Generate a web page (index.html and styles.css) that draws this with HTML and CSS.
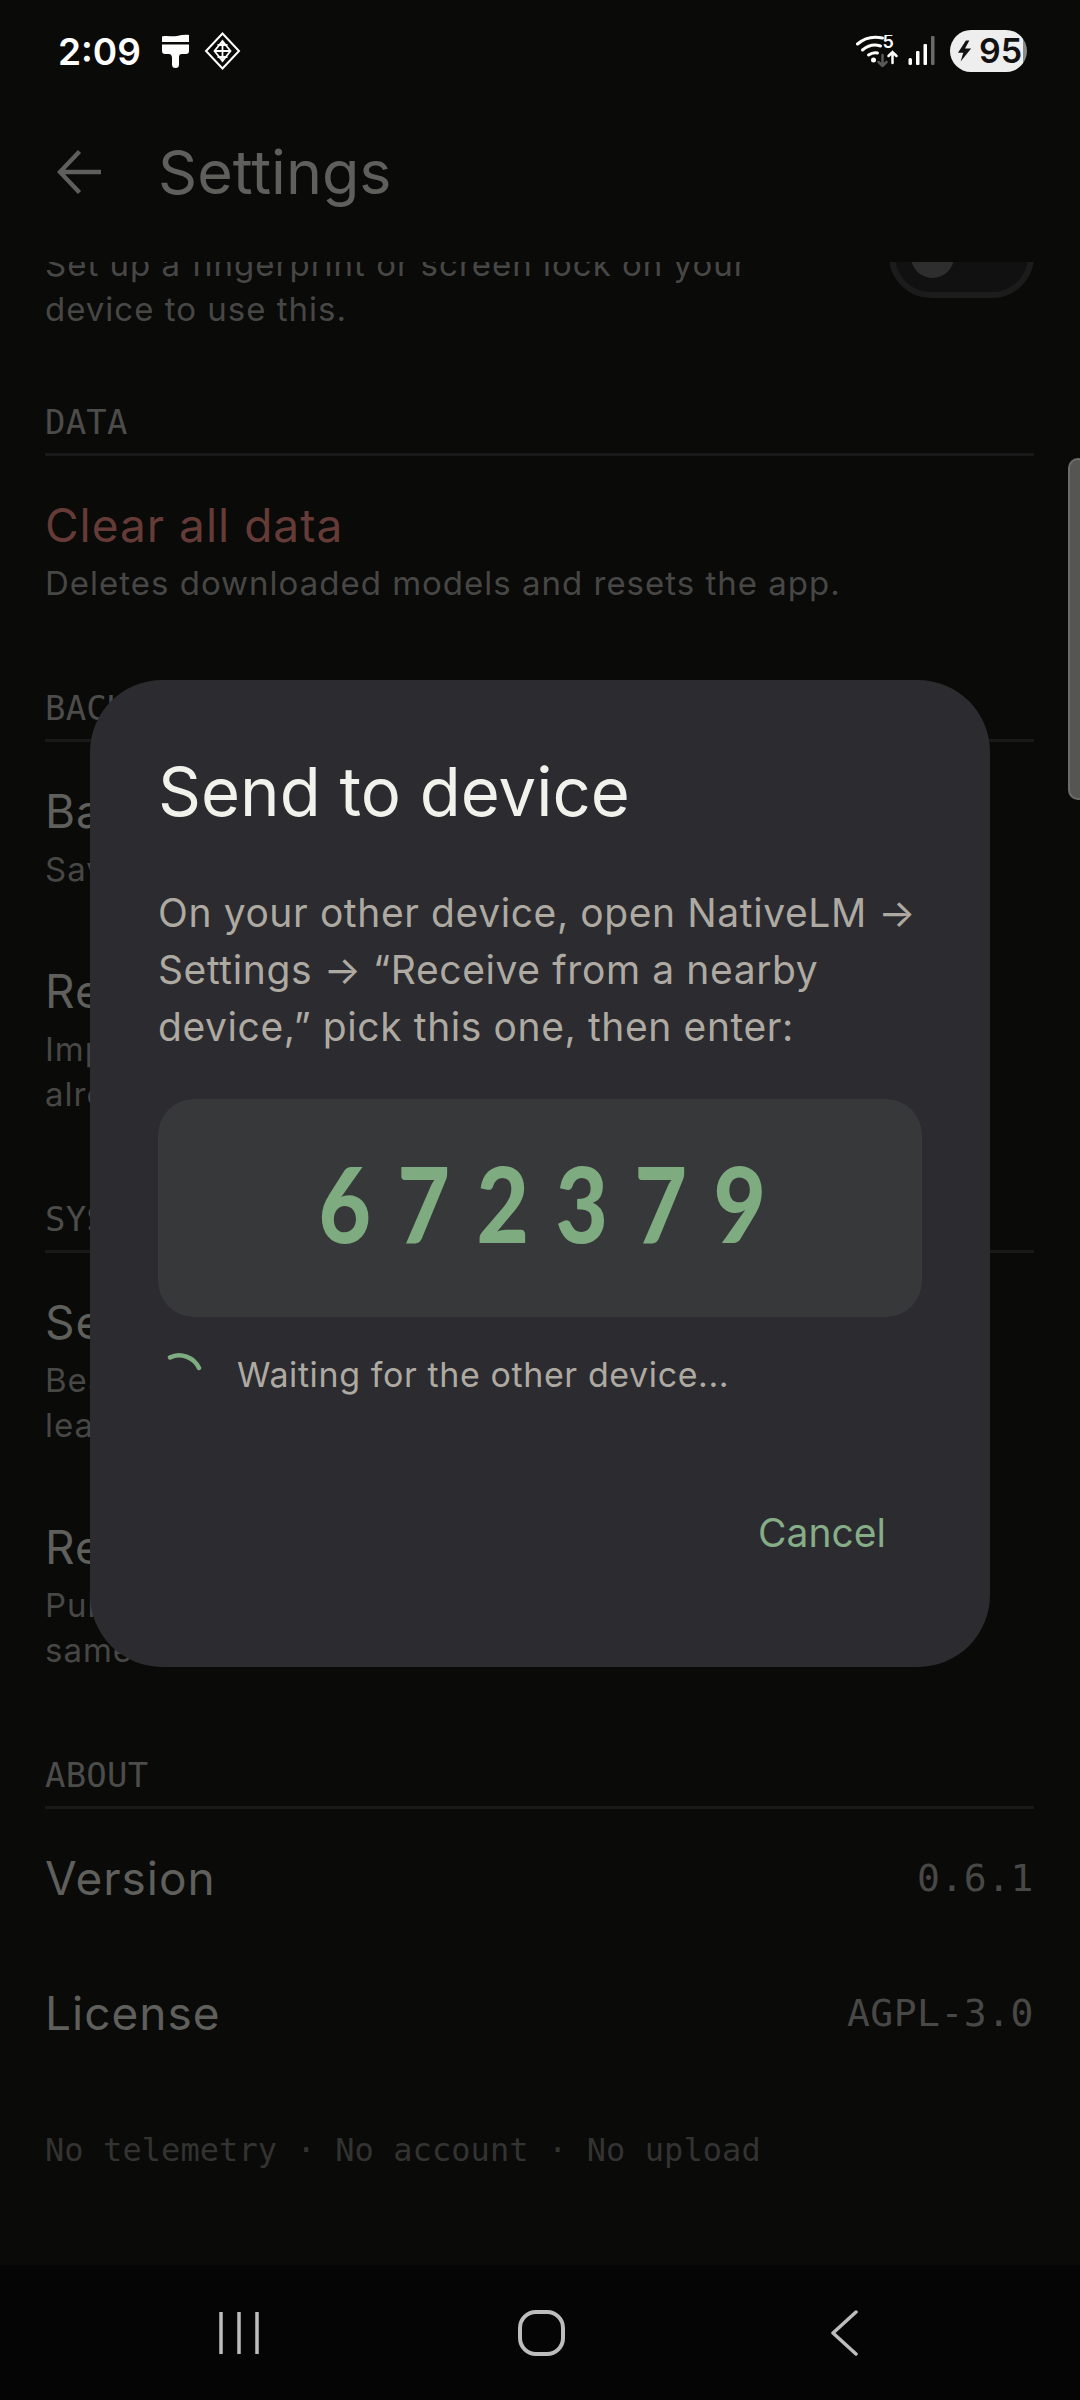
FILE: index.html
```html
<!DOCTYPE html>
<html lang="en">
<head>
<meta charset="utf-8">
<title>Settings</title>
<link rel="stylesheet" href="styles.css">
</head>
<body>
<div class="screen">
  <header class="status">
    <div class="status-left">
      <span class="time">2:09</span>
      <svg class="brush" viewBox="0 0 27 34"><path fill="#fff" d="M0 2.500C6 1 9 3 15 2c4-.7 8-1.500 12-1v7H0zM0 10.500h27v6.500c0 2-1 3-3 3h-4c-2 0-3 1-3 3v7.500a3.500 3.500 0 0 1-7 0V24c0-2-1-4-3-4H3c-2 0-3-1-3-3z"/></svg>
      <svg class="diamond" viewBox="0 0 36 38" fill="none" stroke="#fff"><path stroke-width="2" d="M18 1.500 34.500 19 18 36.500 1.500 19z"/><path stroke-width="1.800" d="M18 9l8 10-8 10-8-10zM13 13h10M13 25h10M10 19h16M18 9v20"/></svg>
    </div>
    <div class="status-right">
      <svg class="wifi" viewBox="0 0 42 32" fill="none" stroke-linecap="round"><g stroke="#fff" stroke-width="3"><path d="M1 9C9 2 17 1 26 3"/><path d="M6 15c6-5 12-6 18-4"/><path d="M12 20c3-2 5-3 9-2"/></g><circle cx="17" cy="25" r="2.500" fill="#fff"/><path stroke="#5a5a5a" stroke-width="2.500" d="M26 20v11M22 27l4 4 4-4"/><path stroke="#fff" stroke-width="2.500" d="M36 28V17M32 21l4-4 4 4"/><text x="26" y="13" class="wifi-five">5</text></svg>
      <svg class="signal" viewBox="0 0 26 30"><rect x="0" y="22" width="3.500" height="7" rx="1.500" fill="#fff"/><rect x="7.500" y="15" width="3.500" height="14" rx="1" fill="#fff"/><rect x="15" y="8" width="3.500" height="21" rx="1" fill="#fff"/><rect x="22.500" y="0" width="3.500" height="29" rx="1" fill="#6a6a6a"/></svg>
      <div class="battery">
        <svg class="bolt" viewBox="0 0 16 24"><path fill="#111" d="M9 0 0 14h6l-3 10 12-15H8l5-9z"/></svg>
        <span class="battery-num">95</span>
      </div>
    </div>
  </header>

  <div class="appbar">
    <svg class="back" viewBox="0 0 46 46" fill="none" stroke="#5f5f5c" stroke-width="4.500"><path d="M45 23H4M23 2 3 23l20 21"/></svg>
    <h1 class="title">Settings</h1>
  </div>

  <main class="viewport">
    <div class="scroller">
      <section class="row-top">
        <p class="desc first">Set up a fingerprint or screen lock on your device to use this.</p>
        <span class="toggle"><span class="thumb"></span></span>
      </section>

      <h2 class="section section-first">DATA</h2>
      <div class="item"><h3 class="name danger">Clear all data</h3><p class="desc">Deletes downloaded models and resets the app.</p></div>

      <h2 class="section">BACKUP</h2>
      <div class="item"><h3 class="name">Back up to a file</h3><p class="desc">Saves chats and settings to a file, password-protected.</p></div>
      <div class="item"><h3 class="name">Restore from a file</h3><p class="desc">Imports a backup file and replaces anything you<br>already have on this device.</p></div>

      <h2 class="section">SYSTEM</h2>
      <div class="item"><h3 class="name">Send to a nearby device</h3><p class="desc">Beam your data to another device on Wi-Fi, with nothing<br>leaving your network.</p></div>
      <div class="item"><h3 class="name">Receive from a nearby device</h3><p class="desc">Pulls data from another device connected to the<br>same network.</p></div>

      <h2 class="section">ABOUT</h2>
      <div class="kv"><span class="name">Version</span><span class="val">0.6.1</span></div>
      <div class="kv"><span class="name">License</span><span class="val">AGPL-3.0</span></div>
      <p class="foot">No telemetry · No account · No upload</p>
    </div>
    <div class="scrollbar"></div>
  </main>

  <nav class="navbar">
    <svg class="nav-recent" viewBox="0 0 40 44" stroke="#bdbdbd" stroke-width="3.500"><path d="M2 1v42M20 1v42M38 1v42"/></svg>
    <svg class="nav-home" viewBox="0 0 47 46" fill="none" stroke="#bdbdbd" stroke-width="4"><rect x="2" y="2" width="43" height="42" rx="16"/></svg>
    <svg class="nav-back" viewBox="0 0 28 46" fill="none" stroke="#bdbdbd" stroke-width="3.500" stroke-linecap="round" stroke-linejoin="round"><path d="M26 2 3 23l23 21"/></svg>
  </nav>

  <div class="dialog" role="dialog">
    <h2 class="dlg-title">Send to device</h2>
    <p class="dlg-body">On your other device, open NativeLM → Settings → “Receive from a nearby device,” pick this one, then enter:</p>
    <div class="code"><span class="digits">672379</span></div>
    <div class="waiting">
      <svg class="spinner" viewBox="0 0 44 44" fill="none" stroke="#7ead81" stroke-width="4.500" stroke-linecap="round"><path d="M12 6.500C22 1 36 6 41 17"/></svg>
      <span>Waiting for the other device...</span>
    </div>
    <div class="actions"><span class="cancel">Cancel</span></div>
  </div>
</div>
</body>
</html>
```

FILE: styles.css
```css
* { box-sizing: border-box; margin: 0; padding: 0; }
html, body { width: 1080px; height: 2400px; background: #0a0a09; overflow: hidden; }
body { font-family: Inter, "Noto Sans", sans-serif; }

.screen { position: relative; width: 1080px; height: 2400px; display: flex; flex-direction: column; }

/* status bar */
.status { height: 102px; padding: 0 53px 0 58px; display: flex; justify-content: space-between; align-items: center; flex: none; }
.status-left { display: flex; align-items: center; }
.time { font: 600 37px/1 Inter, sans-serif; color: #fff; width: 104px; }
.brush { width: 27px; height: 34px; margin-right: 15px; }
.diamond { width: 37px; height: 38px; }
.status-right { display: flex; align-items: center; }
.wifi { width: 43px; height: 32px; margin-right: 9px; }
.wifi-five { font: 600 18px Inter, sans-serif; fill: #fff; stroke: none; }
.signal { width: 27px; height: 30px; margin-right: 15px; }
.battery { width: 77px; height: 42px; border-radius: 21px; background: linear-gradient(90deg, #eee 95%, #8a8a8a 95%); display: flex; align-items: center; padding-left: 8px; }
.bolt { width: 14px; height: 24px; margin-right: 7px; }
.battery-num { font: 600 34px/1 Inter, sans-serif; color: #111; }

/* app bar */
.appbar { height: 160px; flex: none; display: flex; align-items: center; padding: 0 0 20px 57px; }
.back { width: 45px; height: 46px; margin-right: 56px; }
.title { font: 400 61px/1 Inter, sans-serif; color: #5f5f5c; }

/* content */
.viewport { position: relative; flex: 1; min-height: 0; overflow: hidden; }
.scroller { padding: 0 46px 0 45px; margin-top: -28px; }
.row-top { position: relative; }
.first { width: 760px; margin-top: 0; }
.toggle { position: absolute; right: 0; top: -28px; width: 145px; height: 84px; border-radius: 42px; border: 6px solid #1c1c1c; background: #111; }
.thumb { position: absolute; left: 16px; top: 15px; width: 43px; height: 43px; border-radius: 50%; background: #2e2e2e; }

.section { font: 400 34px/30px "DejaVu Sans Mono", monospace; letter-spacing: .2px; color: #4c4c4a; padding-bottom: 16px; border-bottom: 3px solid #191919; margin-top: 86.500px; margin-bottom: 41px; }
.section-first { margin-top: 75px; }
.item { margin-bottom: 71.500px; }
.name { display: block; font: 400 46px/56px Inter, sans-serif; letter-spacing: 1px; color: #5f5f5c; }
.danger { color: #653b37; }
.desc { font: 400 33px/45px Inter, sans-serif; letter-spacing: 1px; color: #474745; margin-top: 8px; white-space: normal; }
.kv { display: flex; justify-content: space-between; align-items: center; height: 56px; margin-bottom: 79px; }
.val { font: 400 38px/1 "DejaVu Sans Mono", monospace; color: #484846; letter-spacing: .5px; }
.foot { font: 400 32px/31px "DejaVu Sans Mono", monospace; letter-spacing: .08px; color: #333331; margin-top: 94.500px; }
.scrollbar { position: absolute; right: -8px; top: 196px; width: 20px; height: 342px; border-radius: 10px; background: #555553; border: 2px solid #6c6c6a; }

/* nav */
.navbar { height: 135px; flex: none; background: #050505; display: flex; align-items: center; padding-left: 219px; }
.nav-recent { width: 40px; height: 44px; }
.nav-home { width: 47px; height: 46px; margin-left: 259px; }
.nav-back { width: 28px; height: 46px; margin-left: 265px; }

/* dialog */
.dialog { position: absolute; left: 90px; top: 680px; width: 900px; height: 987px; border-radius: 72px; background: #2b2b30; padding: 72px 68px 0; }
.dlg-title { font: 400 67px/80px Inter, sans-serif; color: #f2f2ec; }
.dlg-body { font: 400 39px/57px Inter, sans-serif; letter-spacing: .6px; color: #aeaaa2; margin-top: 52px; }
.code { height: 218px; margin-top: 44px; border-radius: 36px; background: #37383a; display: flex; justify-content: center; padding-top: 52px; }
.digits { font: 900 104px/1 Lato, sans-serif; letter-spacing: 30.500px; margin-right: -30.500px; color: #7fab81; transform: scaleX(.87); }
.waiting { display: flex; align-items: center; margin-top: 36px; font: 400 34px/44px Inter, sans-serif; letter-spacing: .6px; color: #aeaaa2; }
.spinner { width: 44px; height: 44px; margin: -4px 35px 0 0; }
.actions { display: flex; justify-content: flex-end; margin-top: 112px; padding-right: 36px; }
.cancel { font: 400 39px/48px Inter, sans-serif; color: #86ad87; }
```
